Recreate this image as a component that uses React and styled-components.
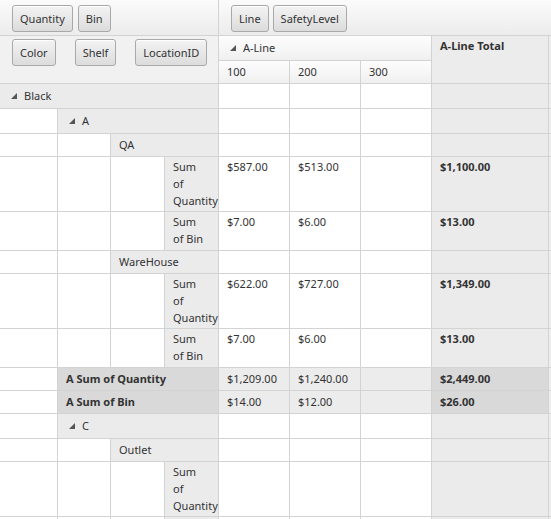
import React from 'react'
import styled, {createGlobalStyle, css} from 'styled-components'

const GlobalStyle = createGlobalStyle`
  html, body {
    margin: 0;
    padding: 0;
    background: #ffffff;
    overflow: hidden;
  }
  body {
    font-family: 'Noto Sans', 'Open Sans', sans-serif;
    font-size: 11px;
    color: #333333;
  }
`

const LINE = '#d3d3d3'
const HEAD_BG = '#ebebeb'
const SUB_BG = '#d9d9d9'

const Grid = styled.div`
  display: grid;
  width: 551px;
  grid-template-columns: 58px 53px 54px 54px 71px 71px 71px 117px 1fr;
  grid-template-rows: ${props => props.rows};
`

const Cell = styled.div`
  box-sizing: border-box;
  border-right: 1px solid ${LINE};
  border-bottom: 1px solid ${LINE};
  padding: 1px 8px 0 8px;
  line-height: 17px;
  white-space: nowrap;
  overflow: visible;
  background: ${props => props.bg || '#ffffff'};
  font-weight: ${props => (props.bold ? 700 : 400)};
  grid-column: ${props => props.col || 'auto'};
  grid-row: ${props => props.row || 'auto'};
  ${props =>
    props.middle &&
    css`
      display: flex;
      align-items: center;
      padding-top: 0;
      padding-bottom: 1px;
    `}
`

const Toolbar = styled.div`
  box-sizing: border-box;
  display: flex;
  align-items: flex-start;
  gap: ${props => props.gap || 5}px;
  padding: ${props => props.pad || '5px 0 0 12px'};
  border-right: 1px solid ${LINE};
  border-bottom: 1px solid ${LINE};
  background: ${props =>
    props.flat ? '#f1f1f1' : 'linear-gradient(#fbfbfb, #ececec)'};
  grid-column: ${props => props.col};
  grid-row: ${props => props.row};
`

const FieldButton = styled.div`
  box-sizing: border-box;
  height: 27px;
  padding: 0 7px;
  line-height: 25px;
  border: 1px solid #a9a9a9;
  border-radius: 3px;
  background: linear-gradient(#f3f3f3, #dcdcdc);
  box-shadow: inset 0 1px 0 #ffffff;
  color: #333;
`

const ColHead = styled(Cell)`
  background: ${props => props.bg || 'linear-gradient(#fdfdfd, #f0f0f0)'};
`

const Toggle = styled.svg`
  width: 6px;
  height: 6px;
  margin: 0 7px 0 3px;
  flex: none;
`

const Expander = () => (
  <Toggle viewBox="0 0 6 6">
    <polygon points="6,0 6,6 0,6" fill="#555" />
  </Toggle>
)

const rows = [
  {level: 0, label: ['Black'], kind: 'group', h: 25},
  {level: 1, label: ['A'], kind: 'group', h: 25},
  {level: 2, label: ['QA'], kind: 'item', h: 23},
  {
    level: 3,
    label: ['Sum', 'of', 'Quantity'],
    kind: 'measure',
    h: 55,
    values: ['$587.00', '$513.00', '', '$1,100.00']
  },
  {
    level: 3,
    label: ['Sum', 'of Bin'],
    kind: 'measure',
    h: 39,
    values: ['$7.00', '$6.00', '', '$13.00']
  },
  {level: 2, label: ['WareHouse'], kind: 'item', h: 23},
  {
    level: 3,
    label: ['Sum', 'of', 'Quantity'],
    kind: 'measure',
    h: 55,
    values: ['$622.00', '$727.00', '', '$1,349.00']
  },
  {
    level: 3,
    label: ['Sum', 'of Bin'],
    kind: 'measure',
    h: 39,
    values: ['$7.00', '$6.00', '', '$13.00']
  },
  {
    level: 1,
    label: ['A Sum of Quantity'],
    kind: 'subtotal',
    h: 23,
    values: ['$1,209.00', '$1,240.00', '', '$2,449.00']
  },
  {
    level: 1,
    label: ['A Sum of Bin'],
    kind: 'subtotal',
    h: 23,
    values: ['$14.00', '$12.00', '', '$26.00']
  },
  {level: 1, label: ['C'], kind: 'group', h: 25},
  {level: 2, label: ['Outlet'], kind: 'item', h: 23},
  {level: 3, label: ['Sum', 'of', 'Quantity'], kind: 'measure', h: 55},
  // next row only peeks in below the window edge
  {level: 3, label: [], kind: 'measure', h: 39}
]

function renderRow(row, i) {
  const cells = []
  const single = row.kind !== 'measure'
  for (let c = 0; c < row.level; c++) {
    cells.push(<Cell key={`e${c}`} />)
  }
  const sub = row.kind === 'subtotal'
  cells.push(
    <Cell
      key="h"
      col={`${row.level + 1} / 5`}
      bg={sub ? SUB_BG : HEAD_BG}
      bold={sub}
      middle={single}
    >
      {row.kind === 'group' && <Expander />}
      {row.label.map((line, j) => (
        <React.Fragment key={j}>
          {j > 0 && <br />}
          {line}
        </React.Fragment>
      ))}
    </Cell>
  )
  const values = row.values || ['', '', '', '']
  values.forEach((v, j) => {
    const total = j === 3
    let bg = total ? HEAD_BG : '#ffffff'
    if (sub) bg = total ? SUB_BG : '#ececec'
    cells.push(
      <Cell key={`v${j}`} bg={bg} bold={total} middle={single}>
        {v}
      </Cell>
    )
  })
  cells.push(<Cell key="t" bg="#eeeeee" />)
  return <React.Fragment key={i}>{cells}</React.Fragment>
}

export default function App() {
  const template = ['36px', '25px', '23px']
    .concat(rows.map(r => `${r.h}px`))
    .join(' ')
  return (
    <>
      <GlobalStyle />
      <Grid rows={template}>
        <Toolbar col="1 / 5" row="1">
          <FieldButton>Quantity</FieldButton>
          <FieldButton>Bin</FieldButton>
        </Toolbar>
        <Toolbar col="5 / 10" row="1" pad="5px 0 0 12px" gap={4}>
          <FieldButton>Line</FieldButton>
          <FieldButton>SafetyLevel</FieldButton>
        </Toolbar>
        <Toolbar col="1 / 5" row="2 / 4" pad="3px 0 0 12px" gap={19} flat>
          <FieldButton>Color</FieldButton>
          <FieldButton>Shelf</FieldButton>
          <FieldButton>LocationID</FieldButton>
        </Toolbar>
        <ColHead col="5 / 8" row="2" middle>
          <Expander />
          A-Line
        </ColHead>
        <ColHead col="8" row="2 / 4" bold bg="#ececec">
          A-Line Total
        </ColHead>
        <ColHead col="9" row="2 / 4" bg="#eeeeee" />
        <ColHead col="5" row="3" middle>
          100
        </ColHead>
        <ColHead col="6" row="3" middle>
          200
        </ColHead>
        <ColHead col="7" row="3" middle>
          300
        </ColHead>
        {rows.map(renderRow)}
      </Grid>
    </>
  )
}
